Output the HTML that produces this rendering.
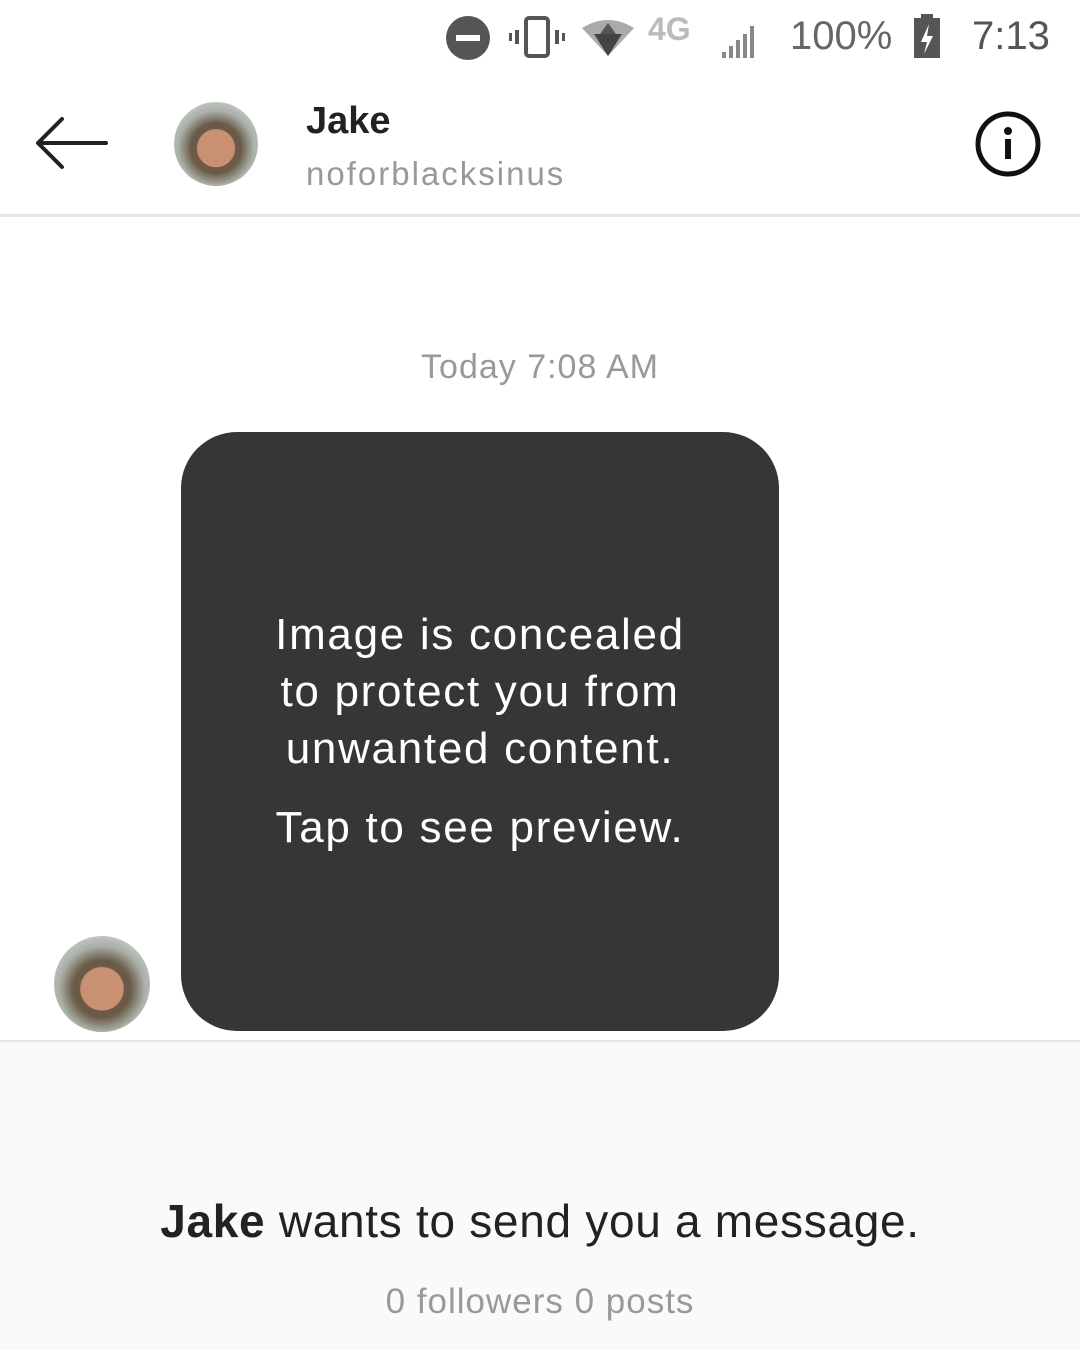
<!DOCTYPE html>
<html><head><meta charset="utf-8"><style>
*{margin:0;padding:0;box-sizing:border-box}
body{width:1080px;height:1350px;background:#fff;font-family:"Liberation Sans",sans-serif;position:relative;overflow:hidden}
.abs{position:absolute}
.av{border-radius:50%;overflow:hidden;background:radial-gradient(circle at 50% 55%,#c99072 0 30%,#6b5a48 31% 40%,#a9b0a8 60%,#e8eae8 100%)}
</style></head><body>
<svg class="abs" style="left:440px;top:8px" width="330" height="60" viewBox="0 0 330 60">
<circle cx="28" cy="30" r="22" fill="#555"/><rect x="16" y="27" width="24" height="6" fill="#fff"/>
<rect x="86" y="10" width="22" height="38" rx="3" fill="none" stroke="#555" stroke-width="4"/>
<rect x="75" y="22" width="4" height="14" fill="#555"/><rect x="69" y="25" width="3" height="8" fill="#555"/>
<rect x="115" y="22" width="4" height="14" fill="#555"/><rect x="122" y="25" width="3" height="8" fill="#555"/>
<path d="M142 20 Q168 4 194 20 L168 48Z" fill="#aaa"/><path d="M154 26 L182 26 L168 48Z" fill="#444"/><path d="M168 15 L176 26 L160 26Z" fill="#555"/>
<text x="208" y="32" font-size="32" font-weight="bold" fill="#bbb" font-family="Liberation Sans">4G</text>
<g fill="#888"><rect x="282" y="44" width="4" height="6"/><rect x="289" y="38" width="4" height="12"/><rect x="296" y="32" width="4" height="18"/><rect x="303" y="26" width="4" height="24"/><rect x="310" y="18" width="4" height="32"/></g>
</svg>
<div class="abs" style="left:790px;top:14px;font-size:40px;color:#666">100%</div>
<svg class="abs" style="left:912px;top:14px" width="32" height="46"><rect x="9" y="0" width="12" height="5" fill="#555"/><rect x="2" y="4" width="26" height="40" fill="#555"/><path d="M17 10 L9 28 L15 28 L12 40 L21 22 L15 22Z" fill="#fff"/></svg>
<div class="abs" style="left:972px;top:14px;font-size:40px;color:#555">7:13</div>
<svg class="abs" style="left:34px;top:114px" width="76" height="58"><path d="M4 29 H72 M4 29 L28 5 M4 29 L28 53" stroke="#222" stroke-width="4" fill="none" stroke-linecap="round"/></svg>
<div class="abs av" style="left:174px;top:102px;width:84px;height:84px"></div>
<div class="abs" style="left:306px;top:100px;font-size:38px;font-weight:bold;color:#222">Jake</div>
<div class="abs" style="left:306px;top:155px;font-size:33px;color:#999;letter-spacing:2px">noforblacksinus</div>
<svg class="abs" style="left:974px;top:110px" width="68" height="68"><circle cx="34" cy="34" r="30" stroke="#111" stroke-width="5" fill="none"/><circle cx="34" cy="21" r="4" fill="#111"/><rect x="31" y="29" width="6" height="20" fill="#111"/></svg>
<div class="abs" style="left:0;top:214px;width:1080px;height:3px;background:#e6e6e6"></div>
<div class="abs" style="left:0;top:348px;width:1080px;text-align:center;font-size:34px;color:#999;letter-spacing:1px">Today 7:08 AM</div>
<div class="abs" style="left:181px;top:432px;width:598px;height:599px;background:#363636;border-radius:56px;color:#fff;text-align:center;font-size:44px;line-height:57px;padding-top:174px;letter-spacing:1.7px">Image is concealed<br>to protect you from<br>unwanted content.<div style="margin-top:22px">Tap to see preview.</div></div>
<div class="abs av" style="left:54px;top:936px;width:96px;height:96px"></div>
<div class="abs" style="left:0;top:1040px;width:1080px;height:310px;background:#fafafa;border-top:2px solid #e6e6e6"></div>
<div class="abs" style="left:0;top:1194px;width:1080px;text-align:center;font-size:46px;color:#222;letter-spacing:0.7px"><b>Jake</b> wants to send you a message.</div>
<div class="abs" style="left:0;top:1282px;width:1080px;text-align:center;font-size:35px;color:#999;letter-spacing:1px">0 followers 0 posts</div>
</body></html>
